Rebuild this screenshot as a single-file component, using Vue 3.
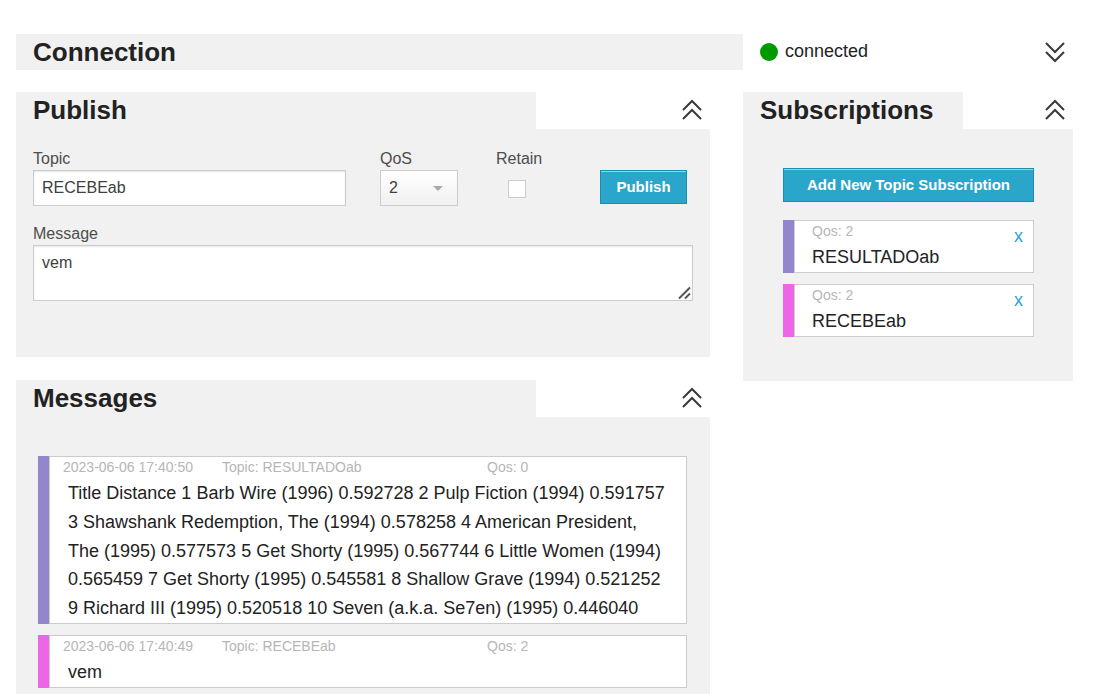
<script setup>
import { ref } from 'vue'

const topic = ref('RECEBEab')
const qos = ref('2')
const retain = ref(false)
const message = ref('vem')

const subscriptions = ref([
  { topic: 'RESULTADOab', qos: 2, tone: 'violet' },
  { topic: 'RECEBEab', qos: 2, tone: 'pink' }
])

const messages = ref([
  {
    time: '2023-06-06 17:40:50',
    topic: 'RESULTADOab',
    qos: 0,
    tone: 'violet',
    text: 'Title Distance 1 Barb Wire (1996) 0.592728 2 Pulp Fiction (1994) 0.591757 3 Shawshank Redemption, The (1994) 0.578258 4 American President, The (1995) 0.577573 5 Get Shorty (1995) 0.567744 6 Little Women (1994) 0.565459 7 Get Shorty (1995) 0.545581 8 Shallow Grave (1994) 0.521252 9 Richard III (1995) 0.520518 10 Seven (a.k.a. Se7en) (1995) 0.446040'
  },
  { time: '2023-06-06 17:40:49', topic: 'RECEBEab', qos: 2, tone: 'pink', text: 'vem' }
])

function publish() {
  messages.value.unshift({
    time: new Date().toISOString().slice(0, 19).replace('T', ' '),
    topic: topic.value,
    qos: Number(qos.value),
    tone: 'pink',
    text: message.value
  })
}
</script>

<template>
  <main class="page">
    <header class="connection">
      <h3 class="title">Connection</h3>
      <div class="status">
        <span class="dot"></span>
        <span class="status-text">connected</span>
        <button class="toggle" type="button" aria-label="Expand connection">
          <svg class="chevrons" viewBox="0 0 20 22"><path d="M1 2l9 9 9-9M1 11l9 9 9-9" /></svg>
        </button>
      </div>
    </header>

    <div class="columns">
      <div class="stack">
        <section>
          <div class="head">
            <h3 class="title tab">Publish</h3>
            <button class="toggle" type="button" aria-label="Collapse publish">
              <svg class="chevrons" viewBox="0 0 20 22"><path d="M1 11l9-9 9 9M1 20l9-9 9 9" /></svg>
            </button>
          </div>
          <form class="body publish-body" @submit.prevent="publish">
            <div class="fields">
              <div class="field topic-field">
                <label for="topic">Topic</label>
                <input id="topic" v-model="topic" class="control" type="text" />
              </div>
              <div class="field qos-field">
                <label for="qos">QoS</label>
                <div class="select-wrap">
                  <select id="qos" v-model="qos" class="control select">
                    <option>0</option>
                    <option>1</option>
                    <option>2</option>
                  </select>
                  <span class="arrow"></span>
                </div>
              </div>
              <div class="field">
                <label for="retain">Retain</label>
                <input id="retain" v-model="retain" class="check" type="checkbox" />
              </div>
              <button class="button publish-button" type="submit">Publish</button>
            </div>
            <div class="field">
              <label for="message">Message</label>
              <div class="area-wrap">
                <textarea id="message" v-model="message" class="control area"></textarea>
                <svg class="grip" viewBox="0 0 14 14"><path d="M2 12.500L13 1.500M8 12.500l5-5" /></svg>
              </div>
            </div>
          </form>
        </section>

        <section>
          <div class="head">
            <h3 class="title tab">Messages</h3>
            <button class="toggle" type="button" aria-label="Collapse messages">
              <svg class="chevrons" viewBox="0 0 20 22"><path d="M1 11l9-9 9 9M1 20l9-9 9 9" /></svg>
            </button>
          </div>
          <ul class="body messages-body">
            <li v-for="(m, i) in messages" :key="i" class="card" :class="m.tone">
              <div class="card-box">
                <div class="meta">
                  <span>{{ m.time }}</span>
                  <span>Topic: {{ m.topic }}</span>
                  <span>Qos: {{ m.qos }}</span>
                </div>
                <p class="text">{{ m.text }}</p>
              </div>
            </li>
          </ul>
        </section>
      </div>

      <section>
        <div class="head">
          <h3 class="title tab narrow-tab">Subscriptions</h3>
          <button class="toggle" type="button" aria-label="Collapse subscriptions">
            <svg class="chevrons" viewBox="0 0 20 22"><path d="M1 11l9-9 9 9M1 20l9-9 9 9" /></svg>
          </button>
        </div>
        <div class="body subs-body">
          <button class="button" type="button">Add New Topic Subscription</button>
          <ul class="subs">
            <li v-for="(s, i) in subscriptions" :key="s.topic" class="card" :class="s.tone">
              <div class="card-box sub-box">
                <div>
                  <div class="sub-qos">Qos: {{ s.qos }}</div>
                  <div class="sub-topic">{{ s.topic }}</div>
                </div>
                <a class="remove" href="#" :aria-label="'Unsubscribe ' + s.topic" @click.prevent="subscriptions.splice(i, 1)">x</a>
              </div>
            </li>
          </ul>
        </div>
      </section>
    </div>
  </main>
</template>

<style>
body {
  margin: 0;
  background: #fff;
}
</style>

<style scoped>
.page {
  padding: 34px 20px 0 16px;
  font-family: "Liberation Sans", Arial, sans-serif;
  font-size: 18px;
  color: #222;
}
.page * {
  box-sizing: border-box;
}
.connection {
  display: grid;
  grid-template-columns: minmax(0, 727fr) minmax(0, 330fr);
  margin-bottom: 22px;
}
.columns {
  display: grid;
  grid-template-columns: minmax(0, 694fr) minmax(0, 330fr);
  column-gap: 33px;
  align-items: start;
}
.stack {
  display: flex;
  flex-direction: column;
  gap: 23px;
}
.title {
  margin: 0;
  padding-left: 17px;
  font-size: 26px;
  line-height: 36px;
  font-weight: bold;
  background: #f1f1f1;
}
.status {
  display: flex;
  align-items: center;
  padding-left: 17px;
}
.dot {
  width: 18px;
  height: 18px;
  border-radius: 50%;
  background: #090;
}
.status-text {
  margin-left: 7px;
  line-height: 34px;
  align-self: flex-start;
}
.head {
  display: flex;
  height: 37px;
}
.tab {
  width: 74.9%;
}
.narrow-tab {
  width: 66.6667%;
}
.toggle {
  margin: 0 8px 0 auto;
  padding: 0;
  border: 0;
  background: none;
  height: 36px;
  cursor: pointer;
}
.chevrons {
  display: block;
  width: 20px;
  height: 22px;
  fill: none;
  stroke: #3a3a3a;
  stroke-width: 2;
}
.body {
  margin: 0;
  background: #f1f1f1;
}
.publish-body {
  display: flex;
  flex-direction: column;
  gap: 17px;
  padding: 19px 17px 56px;
}
.fields {
  display: grid;
  grid-template-columns: 347fr 116fr 104fr 93fr;
}
.field {
  min-width: 0;
}
.topic-field {
  padding-right: 34px;
}
.qos-field {
  padding-right: 38px;
}
.field label {
  display: block;
  font-size: 16px;
  line-height: 22px;
  color: #4d4d4d;
}
.control {
  display: block;
  width: 100%;
  height: 36px;
  margin: 0;
  padding: 8px;
  border: 1px solid #ccc;
  border-radius: 0;
  background: #fff;
  box-shadow: inset 0 1px 2px rgba(0, 0, 0, 0.1);
  font-family: inherit;
  font-size: 16px;
  line-height: 18px;
  color: #404040;
}
.select-wrap,
.area-wrap {
  position: relative;
}
.select {
  appearance: none;
  background: linear-gradient(#fff, #f1f1f1);
  box-shadow: none;
}
.arrow {
  position: absolute;
  right: 15px;
  top: 16px;
  border: 5px solid transparent;
  border-top-color: #aaa;
  border-bottom: 0;
  pointer-events: none;
}
.check {
  appearance: none;
  display: block;
  width: 18px;
  height: 18px;
  margin: 10px 0 0 12px;
  border: 1px solid #ccc;
  background: #fff;
}
.check:checked {
  background: #2ba6cb;
}
.button {
  width: 100%;
  height: 34px;
  padding: 0 0 2px;
  border: 1px solid #1e8cad;
  background: #2ba6cb;
  box-shadow: inset 0 1px 0 rgba(255, 255, 255, 0.5);
  color: #fff;
  font-family: inherit;
  font-size: 15px;
  font-weight: bold;
  cursor: pointer;
}
.publish-button {
  width: 87px;
  margin-top: 22px;
}
.area {
  height: 56px;
  resize: none;
}
.grip {
  position: absolute;
  right: 2px;
  bottom: 1px;
  width: 14px;
  height: 14px;
  fill: none;
  stroke: #555;
  stroke-width: 2;
  pointer-events: none;
}
.messages-body,
.subs {
  display: flex;
  flex-direction: column;
  gap: 11px;
  list-style: none;
}
.messages-body {
  padding: 39px 23px 6px 22px;
}
.subs-body {
  padding: 39px 39px 44px 40px;
}
.subs {
  margin: 18px 0 0;
  padding: 0;
}
.card {
  padding-left: 11px;
}
.violet {
  background: #9486ce;
}
.pink {
  background: #ee66e8;
}
.card-box {
  border: 1px solid #ccc;
  background: #fff;
}
.meta {
  display: grid;
  grid-template-columns: 159fr 265fr 199fr;
  padding-left: 13px;
}
.meta,
.sub-qos {
  padding-bottom: 1px;
  font-size: 14px;
  line-height: 21px;
  color: #b6b6b6;
}
.text {
  margin: 0;
  padding: 0 18px;
  line-height: 1.6;
}
.sub-box {
  display: flex;
  justify-content: space-between;
  padding: 0 10px 0 17px;
}
.sub-topic {
  line-height: 1.6;
}
.remove {
  line-height: 31px;
  color: #2ba6cb;
  text-decoration: none;
}
</style>
